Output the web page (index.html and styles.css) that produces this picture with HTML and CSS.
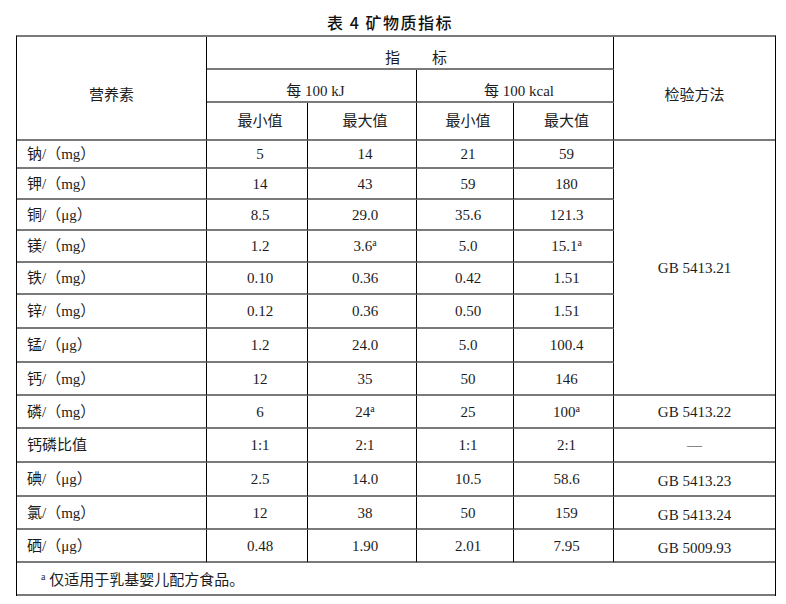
FILE: index.html
```html
<!DOCTYPE html>
<html lang="zh-CN">
<head>
<meta charset="utf-8">
<title>表 4 矿物质指标</title>
<link rel="stylesheet" href="styles.css">
</head>
<body>
<div class="page">
  <h1 class="title">表 4 矿物质指标</h1>
  <table class="minerals">
    <colgroup>
      <col class="c-name"><col class="c-a"><col class="c-b"><col class="c-c"><col class="c-d"><col class="c-method">
    </colgroup>
    <thead>
      <tr class="r33">
        <th rowspan="3" class="tall-head">营养素</th>
        <th colspan="4" class="low idx">指<span class="sp"></span>标</th>
        <th rowspan="3" class="tall-head last">检验方法</th>
      </tr>
      <tr class="r33">
        <th colspan="2" class="low unit">每 100 kJ</th>
        <th colspan="2" class="low unit">每 100 kcal</th>
      </tr>
      <tr class="r38">
        <th class="v">最小值</th><th class="v">最大值</th><th class="v">最小值</th><th class="v">最大值</th>
      </tr>
    </thead>
    <tbody>
      <tr class="r28"><td class="name">钠/（mg）</td><td class="v">5</td><td class="v">14</td><td class="v">21</td><td class="v">59</td><td rowspan="8" class="last">GB 5413.21</td></tr>
      <tr class="r31"><td class="name">钾/（mg）</td><td class="v">14</td><td class="v">43</td><td class="v">59</td><td class="v">180</td></tr>
      <tr class="r31"><td class="name">铜/（μg）</td><td class="v">8.5</td><td class="v">29.0</td><td class="v">35.6</td><td class="v">121.3</td></tr>
      <tr class="r32"><td class="name">镁/（mg）</td><td class="v">1.2</td><td class="v">3.6<sup>a</sup></td><td class="v">5.0</td><td class="v">15.1<sup>a</sup></td></tr>
      <tr class="r32"><td class="name">铁/（mg）</td><td class="v">0.10</td><td class="v">0.36</td><td class="v">0.42</td><td class="v">1.51</td></tr>
      <tr class="r34"><td class="name">锌/（mg）</td><td class="v">0.12</td><td class="v">0.36</td><td class="v">0.50</td><td class="v">1.51</td></tr>
      <tr class="r34"><td class="name">锰/（μg）</td><td class="v">1.2</td><td class="v">24.0</td><td class="v">5.0</td><td class="v">100.4</td></tr>
      <tr class="r33"><td class="name">钙/（mg）</td><td class="v">12</td><td class="v">35</td><td class="v">50</td><td class="v">146</td></tr>
      <tr class="r33"><td class="name">磷/（mg）</td><td class="v">6</td><td class="v">24<sup>a</sup></td><td class="v">25</td><td class="v">100<sup>a</sup></td><td class="last">GB 5413.22</td></tr>
      <tr class="r34"><td class="name">钙磷比值</td><td class="v">1:1</td><td class="v">2:1</td><td class="v">1:1</td><td class="v">2:1</td><td class="last">—</td></tr>
      <tr class="r34"><td class="name">碘/（μg）</td><td class="v">2.5</td><td class="v">14.0</td><td class="v">10.5</td><td class="v">58.6</td><td class="last low-m">GB 5413.23</td></tr>
      <tr class="r33"><td class="name">氯/（mg）</td><td class="v">12</td><td class="v">38</td><td class="v">50</td><td class="v">159</td><td class="last low-m">GB 5413.24</td></tr>
      <tr class="r33"><td class="name">硒/（μg）</td><td class="v">0.48</td><td class="v">1.90</td><td class="v">2.01</td><td class="v">7.95</td><td class="last low-m">GB 5009.93</td></tr>
      <tr class="r33"><td colspan="6" class="note last"><sup>a</sup> 仅适用于乳基婴儿配方食品。</td></tr>
    </tbody>
  </table>
</div>
</body>
</html>
```
FILE: styles.css
```css
* {
  box-sizing: border-box;
}

body {
  margin: 0;
  background: #fff;
  color: #1c1c1c;
  font-family: "Liberation Serif", "Noto Sans CJK SC", serif;
  font-size: 15px;
}

.page {
  width: 786px;
  padding: 9px 0 0 16px;
}

.title {
  margin: 0;
  width: 760px;
  height: 26px;
  padding-right: 12px;
  font-family: "Noto Sans CJK SC", "Liberation Sans", sans-serif;
  font-size: 16px;
  font-weight: 500;
  line-height: 26px;
  letter-spacing: 1.5px;
  text-align: center;
  color: #111;
}

.minerals {
  width: 760px;
  table-layout: fixed;
  border-collapse: separate;
  border-spacing: 0;
  border-top: 2px solid #7a7a7a;
  border-left: 1px solid #000;
  border-right: 1px solid #000;
}

.c-name { width: 190px; }
.c-a { width: 101px; }
.c-b { width: 109px; }
.c-c { width: 97px; }
.c-d { width: 100px; }
.c-method { width: 161px; }

.minerals th,
.minerals td {
  padding: 0;
  font-weight: 400;
  text-align: center;
  vertical-align: middle;
  line-height: 18px;
  border-bottom: 2px solid #7a7a7a;
  border-right: 1px solid #000;
  white-space: nowrap;
}

.minerals .last {
  border-right: 0;
}

.r28 > * { height: 28px; }
.r31 > * { height: 31px; }
.r32 > * { height: 32px; }
.r33 > * { height: 33px; }
.r34 > * { height: 34px; }
.r38 > * { height: 38px; }

.minerals .tall-head {
  padding-top: 14px;
}

.minerals .low {
  padding-top: 11px;
}

.minerals .idx {
  padding-left: 12px;
}

.sp {
  display: inline-block;
  width: 32px;
}

.minerals .unit {
  padding-left: 8px;
}

.minerals .v {
  padding-left: 6px;
}

.minerals .low-m {
  padding-top: 4px;
}

.minerals .name {
  text-align: left;
  padding-left: 10px;
}

.minerals .note {
  text-align: left;
  padding-left: 24px;
  padding-top: 2px;
}

sup {
  font-size: 10px;
  line-height: 0;
  vertical-align: 5px;
}
```
